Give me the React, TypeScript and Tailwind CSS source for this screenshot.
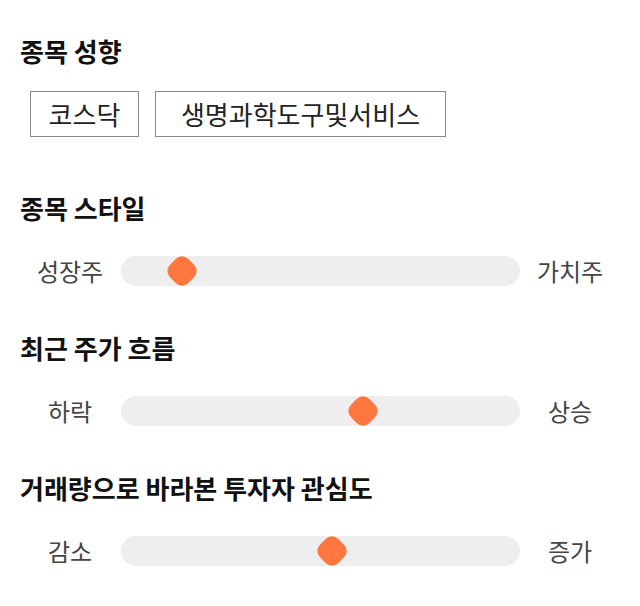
import React from "react";

const font = { fontFamily: '"Noto Sans CJK KR", "Noto Sans", sans-serif' };

function Heading({ children }: { children: React.ReactNode }) {
  return (
    <div className="h-[30px] flex items-center text-[26px] font-bold text-[#111] leading-none">
      {children}
    </div>
  );
}

function Slider({ left, right, pos }: { left: string; right: string; pos: number }) {
  return (
    <div className="flex items-center h-[30px]">
      <div className="w-[100px] text-center text-[24px] text-[#444] leading-none">{left}</div>
      <div className="relative flex-1 h-[30px] ml-[1px] rounded-full bg-[#eeeeee]">
        <div
          className="absolute top-1/2 w-[26px] h-[26px] -translate-x-1/2 -translate-y-1/2 rotate-45 rounded-[9px] bg-[#ff773f]"
          style={{ left: `${pos}px` }}
        />
      </div>
      <div className="w-[100px] text-center text-[24px] text-[#444] leading-none">{right}</div>
    </div>
  );
}

export default function App() {
  return (
    <div className="w-[640px] h-[606px] bg-white px-5 pt-[36px]" style={font}>
      <Heading>종목 성향</Heading>
      <div className="flex gap-4 ml-[10px] mt-[25px]">
        <div className="h-[46px] w-[109px] flex items-center justify-center border border-[#888] text-[26px] text-[#222] leading-none">
          코스닥
        </div>
        <div className="h-[46px] w-[291px] flex items-center justify-center border border-[#888] text-[26px] text-[#222] leading-none">
          생명과학도구및서비스
        </div>
      </div>
      <div className="mt-[56px]">
        <Heading>종목 스타일</Heading>
      </div>
      <div className="mt-[33px]">
        <Slider left="성장주" right="가치주" pos={61} />
      </div>
      <div className="mt-[47px]">
        <Heading>최근 주가 흐름</Heading>
      </div>
      <div className="mt-[33px]">
        <Slider left="하락" right="상승" pos={241.5} />
      </div>
      <div className="mt-[47px]">
        <Heading>거래량으로 바라본 투자자 관심도</Heading>
      </div>
      <div className="mt-[33px]">
        <Slider left="감소" right="증가" pos={211} />
      </div>
    </div>
  );
}
